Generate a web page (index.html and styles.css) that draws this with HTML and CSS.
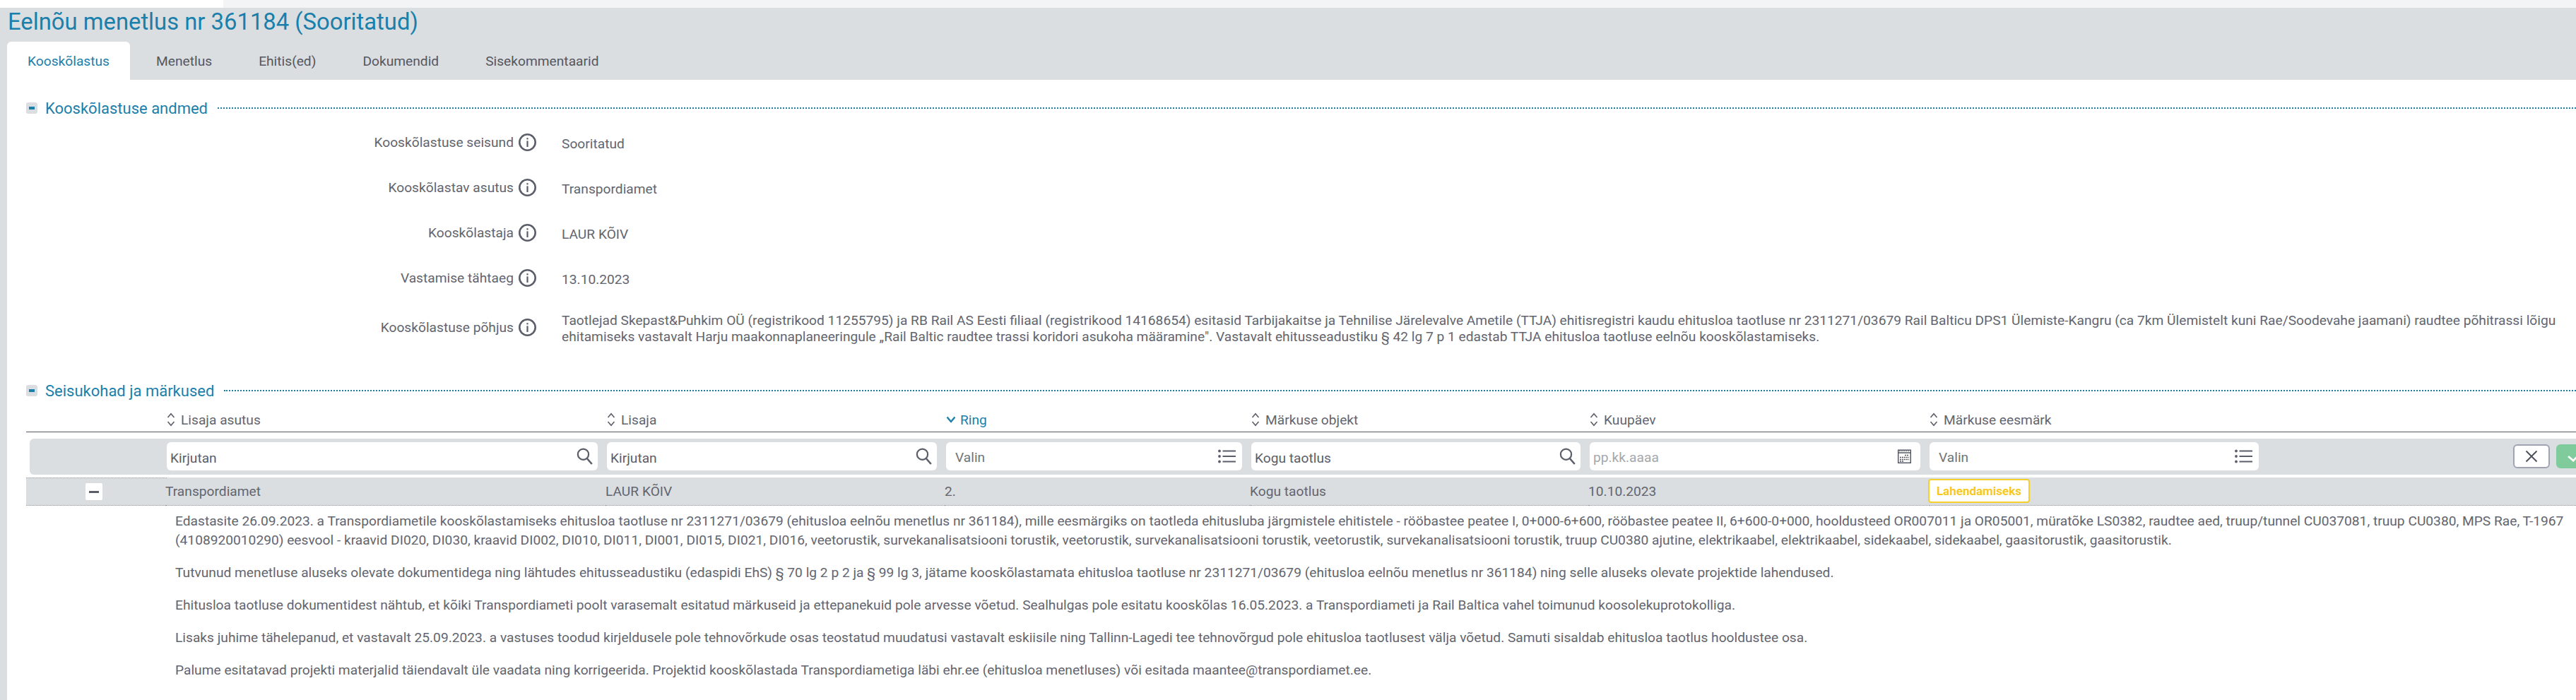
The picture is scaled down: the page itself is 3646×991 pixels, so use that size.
FILE: index.html
```html
<!DOCTYPE html>
<html lang="et">
<head>
<meta charset="utf-8">
<title>Eelnõu menetlus nr 361184</title>
<link rel="stylesheet" href="styles.css">
</head>
<body>
<svg class="defs" width="0" height="0" aria-hidden="true">
  <symbol id="i-info" viewBox="0 0 25 25"><circle cx="12.5" cy="12.5" r="11.2" fill="none" stroke="currentColor" stroke-width="2.6"/><rect x="11.4" y="10.4" width="2.200" height="8.600" fill="currentColor"/><rect x="11.4" y="6.2" width="2.200" height="2.200" fill="currentColor"/></symbol>
  <symbol id="i-sort" viewBox="0 0 12 20"><path d="M1.5 7 6 1.8 10.5 7M1.5 13 6 18.2 10.5 13" fill="none" stroke="currentColor" stroke-width="1.6"/></symbol>
  <symbol id="i-down" viewBox="0 0 14 10"><path d="M1.500 1.500 7 8l5.500-6.500" fill="none" stroke="currentColor" stroke-width="2.400"/></symbol>
  <symbol id="i-search" viewBox="0 0 24 24"><circle cx="9.500" cy="9.200" r="7.600" fill="none" stroke="currentColor" stroke-width="2.200"/><path d="m14.800 15 7 8" fill="none" stroke="currentColor" stroke-width="2.600"/></symbol>
  <symbol id="i-list" viewBox="0 0 25 20"><circle cx="2" cy="2.500" r="1.900" fill="currentColor"/><circle cx="2" cy="10" r="1.900" fill="currentColor"/><circle cx="2" cy="17.500" r="1.900" fill="currentColor"/><path d="M6.500 2.500H25M6.500 10H25M6.500 17.500H25" stroke="currentColor" stroke-width="2.200"/></symbol>
  <symbol id="i-cal" viewBox="0 0 19 20"><rect x=".7" y="1.200" width="17.600" height="18.100" fill="none" stroke="currentColor" stroke-width="1.400"/><path d="M1 5h17" stroke="currentColor" stroke-width="1.400"/><path d="M3 1v2.500M6 1v2.500M9 1v2.500M12 1v2.500M15 1v2.500" stroke="currentColor"/><path d="M10 8.500h6M3 11.500h13M3 14.500h13M3 17h6" stroke="currentColor" stroke-width="1.600" stroke-dasharray="2 1"/></symbol>
</svg>

<div class="topbar"><div class="topbar-left"></div></div>

<header class="header">
  <h1 class="title">Eelnõu menetlus nr 361184 (Sooritatud)</h1>
  <nav class="tabs">
    <a class="tab tab-active">Kooskõlastus</a>
    <a class="tab">Menetlus</a>
    <a class="tab">Ehitis(ed)</a>
    <a class="tab">Dokumendid</a>
    <a class="tab">Sisekommentaarid</a>
  </nav>
</header>

<main class="main">
  <section class="section section-first">
    <div class="section-head">
      <span class="collapse"><span class="collapse-bar"></span></span>
      <h2 class="section-title">Kooskõlastuse andmed</h2>
      <span class="dots"></span>
    </div>
    <div class="field">
      <div class="field-label">Kooskõlastuse seisund</div>
      <svg class="info"><use href="#i-info"/></svg>
      <div class="field-value">Sooritatud</div>
    </div>
    <div class="field">
      <div class="field-label">Kooskõlastav asutus</div>
      <svg class="info"><use href="#i-info"/></svg>
      <div class="field-value">Transpordiamet</div>
    </div>
    <div class="field">
      <div class="field-label">Kooskõlastaja</div>
      <svg class="info"><use href="#i-info"/></svg>
      <div class="field-value">LAUR KÕIV</div>
    </div>
    <div class="field">
      <div class="field-label">Vastamise tähtaeg</div>
      <svg class="info"><use href="#i-info"/></svg>
      <div class="field-value">13.10.2023</div>
    </div>
    <div class="field field-tall">
      <div class="field-label">Kooskõlastuse põhjus</div>
      <svg class="info"><use href="#i-info"/></svg>
      <div class="field-value field-text">Taotlejad Skepast&amp;Puhkim OÜ (registrikood 11255795) ja RB Rail AS Eesti filiaal (registrikood 14168654) esitasid Tarbijakaitse ja Tehnilise Järelevalve Ametile (TTJA) ehitisregistri kaudu ehitusloa taotluse nr 2311271/03679 Rail Balticu DPS1 Ülemiste-Kangru (ca 7km Ülemistelt kuni Rae/Soodevahe jaamani) raudtee põhitrassi lõigu<br>ehitamiseks vastavalt Harju maakonnaplaneeringule „Rail Baltic raudtee trassi koridori asukoha määramine". Vastavalt ehitusseadustiku § 42 lg 7 p 1 edastab TTJA ehitusloa taotluse eelnõu kooskõlastamiseks.</div>
    </div>
  </section>

  <section class="section">
    <div class="section-head">
      <span class="collapse"><span class="collapse-bar"></span></span>
      <h2 class="section-title">Seisukohad ja märkused</h2>
      <span class="dots"></span>
    </div>

    <div class="grid thead">
      <div></div>
      <div class="th"><svg class="sort"><use href="#i-sort"/></svg>Lisaja asutus</div>
      <div class="th"><svg class="sort"><use href="#i-sort"/></svg>Lisaja</div>
      <div class="th th-active"><svg class="sort-down"><use href="#i-down"/></svg>Ring</div>
      <div class="th"><svg class="sort"><use href="#i-sort"/></svg>Märkuse objekt</div>
      <div class="th"><svg class="sort"><use href="#i-sort"/></svg>Kuupäev</div>
      <div class="th"><svg class="sort"><use href="#i-sort"/></svg>Märkuse eesmärk</div>
    </div>

    <div class="grid filters">
      <div></div>
      <div class="input input-tight"><span class="input-text">Kirjutan</span><svg class="ico-search"><use href="#i-search"/></svg></div>
      <div class="input input-tight"><span class="input-text">Kirjutan</span><svg class="ico-search"><use href="#i-search"/></svg></div>
      <div class="input input-muted"><span class="input-text">Valin</span><svg class="ico-list"><use href="#i-list"/></svg></div>
      <div class="input input-tight"><span class="input-text">Kogu taotlus</span><svg class="ico-search"><use href="#i-search"/></svg></div>
      <div class="input input-placeholder"><span class="input-text">pp.kk.aaaa</span><svg class="ico-cal"><use href="#i-cal"/></svg></div>
      <div class="filter-last">
        <div class="input input-muted input-last"><span class="input-text">Valin</span><svg class="ico-list"><use href="#i-list"/></svg></div>
        <button class="btn btn-cancel" type="button"><svg viewBox="0 0 18 18"><path d="M1.500 1.500l15 15M16.500 1.500l-15 15" fill="none" stroke="currentColor" stroke-width="2"/></svg></button>
        <button class="btn btn-ok" type="button"><svg viewBox="0 0 24 18"><path d="M2 9l8 7L22 3" fill="none" stroke="currentColor" stroke-width="3"/></svg></button>
      </div>
    </div>

    <div class="grid row">
      <div class="cell cell-edge"><span class="row-toggle"><span class="row-toggle-bar"></span></span></div>
      <div class="cell">Transpordiamet</div>
      <div class="cell">LAUR KÕIV</div>
      <div class="cell">2.</div>
      <div class="cell">Kogu taotlus</div>
      <div class="cell">10.10.2023</div>
      <div class="cell cell-last"><span class="badge">Lahendamiseks</span></div>
    </div>

    <div class="note">
      <p>Edastasite 26.09.2023. a Transpordiametile kooskõlastamiseks ehitusloa taotluse nr 2311271/03679 (ehitusloa eelnõu menetlus nr 361184), mille eesmärgiks on taotleda ehitusluba järgmistele ehitistele - rööbastee peatee I, 0+000-6+600, rööbastee peatee II, 6+600-0+000, hooldusteed OR007011 ja OR05001, müratõke LS0382, raudtee aed, truup/tunnel CU037081, truup CU0380, MPS Rae, T-1967<br>(4108920010290) eesvool - kraavid DI020, DI030, kraavid DI002, DI010, DI011, DI001, DI015, DI021, DI016, veetorustik, survekanalisatsiooni torustik, veetorustik, survekanalisatsiooni torustik, veetorustik, survekanalisatsiooni torustik, truup CU0380 ajutine, elektrikaabel, elektrikaabel, sidekaabel, sidekaabel, gaasitorustik, gaasitorustik.</p>
      <p>Tutvunud menetluse aluseks olevate dokumentidega ning lähtudes ehitusseadustiku (edaspidi EhS) § 70 lg 2 p 2 ja § 99 lg 3, jätame kooskõlastamata ehitusloa taotluse nr 2311271/03679 (ehitusloa eelnõu menetlus nr 361184) ning selle aluseks olevate projektide lahendused.</p>
      <p>Ehitusloa taotluse dokumentidest nähtub, et kõiki Transpordiameti poolt varasemalt esitatud märkuseid ja ettepanekuid pole arvesse võetud. Sealhulgas pole esitatu kooskõlas 16.05.2023. a Transpordiameti ja Rail Baltica vahel toimunud koosolekuprotokolliga.</p>
      <p>Lisaks juhime tähelepanud, et vastavalt 25.09.2023. a vastuses toodud kirjeldusele pole tehnovõrkude osas teostatud muudatusi vastavalt eskiisile ning Tallinn-Lagedi tee tehnovõrgud pole ehitusloa taotlusest välja võetud. Samuti sisaldab ehitusloa taotlus hooldustee osa.</p>
      <p>Palume esitatavad projekti materjalid täiendavalt üle vaadata ning korrigeerida. Projektid kooskõlastada Transpordiametiga läbi ehr.ee (ehitusloa menetluses) või esitada maantee@transpordiamet.ee.</p>
    </div>
  </section>
</main>
</body>
</html>
```

FILE: styles.css
```css
* { box-sizing: border-box; }
html, body { margin: 0; padding: 0; }
body {
  width: 3646px;
  height: 991px;
  overflow: hidden;
  background: #fff;
  font-family: Roboto, "Liberation Sans", sans-serif;
  font-size: 19.2px;
  color: #62656f;
}
.defs { position: absolute; }

.topbar { height: 11px; background: #f3f4f5; }
.topbar-left { width: 316px; height: 11px; background: #fff; }

.header { height: 102px; background: #dbdee1; display: flex; flex-direction: column; }
.title {
  margin: 0;
  height: 48px;
  padding-left: 11px;
  font-size: 32.800px;
  font-weight: 400;
  line-height: 40px;
  color: #1a80ab;
}
.tabs { display: flex; gap: 8px; padding-left: 10px; height: 54px; }
.tab { display: flex; align-items: center; padding: 0 29px; color: #54575f; }
.tab-active { background: #fff; border-radius: 6px 6px 0 0; color: #1a80ab; }

.main { height: 878px; border-left: 10px solid #dbdee1; padding: 24px 0 0 27px; }

.section-first { margin-bottom: 36px; }
.section-head { display: flex; align-items: center; height: 32px; }
.collapse {
  width: 16px; height: 16px; margin-right: 11px;
  background: #dbdee1; border-radius: 3px;
  display: flex; align-items: center; justify-content: center;
}
.collapse-bar { width: 8px; height: 4px; background: #1a80ab; }
.section-title { margin: 0 14px 0 0; font-size: 22px; font-weight: 400; color: #1a80ab; white-space: nowrap; }
.dots { flex: 1; border-top: 2px dotted #1f7f9c; }

.field {
  display: grid;
  grid-template-columns: 690px 25px 1fr;
  column-gap: 7px;
  align-items: center;
  height: 64px;
}
.field-tall { height: 76px; }
.field-label { text-align: right; }
.info { width: 25px; height: 25px; color: #5b5e69; }
.field-value { margin-left: 29px; padding-top: 4px; white-space: nowrap; }
.field-text { line-height: 23px; }

.grid { display: grid; grid-template-columns: 199px 623px 480px 432px 479px 481px 1fr; }

.thead { height: 43px; border-bottom: 1px solid #555a64; align-items: center; }
.th { display: flex; align-items: center; padding-top: 8px; }
.th-active { color: #1a80ab; }
.sort { width: 12px; height: 20px; margin-right: 8px; color: #5b5e69; }
.sort-down { width: 14px; height: 10px; margin-right: 6px; color: #1a80ab; }

.filters {
  margin: 9px 0 4px 5px;
  height: 51px;
  padding-top: 5px;
  grid-template-columns: 194px 623px 480px 432px 479px 481px 1fr;
  background: #dbdee1;
  border-radius: 6px 0 0 6px;
}
.input {
  height: 40px;
  width: calc(100% - 13px);
  background: #fff;
  border-radius: 6px;
  display: flex;
  align-items: center;
  justify-content: space-between;
  padding: 0 6px 0 13px;
  color: #70757a;
  white-space: nowrap;
}
.input-text { padding-top: 2px; }
.input-tight { padding-left: 5px; color: #5b5e69; }
.input-tight .input-text { padding-top: 4px; }
.input-placeholder { color: #a5a8ad; padding-left: 5px; padding-right: 13px; }
.input-muted { padding-right: 9px; }
.ico-search { width: 24px; height: 24px; color: #5b5e69; }
.ico-list { width: 25px; height: 20px; color: #5b5e69; }
.ico-cal { width: 19px; height: 20px; color: #4f525c; }

.filter-last { display: flex; align-items: flex-start; }
.input-last { width: 466px; flex: none; }
.btn {
  flex: none;
  width: 52px; height: 34px;
  margin-top: 3px;
  padding: 0;
  border-radius: 6px;
  display: flex; align-items: center; justify-content: center;
}
.btn-cancel { margin-left: 360px; background: #fff; border: 2px solid #a0a3b3; color: #4f525c; }
.btn-cancel svg { width: 18px; height: 18px; }
.btn-ok { margin-left: 9px; background: #7fcb9c; border: 2px solid #7fcb9c; color: #fff; }
.btn-ok svg { width: 22px; height: 16px; }

.row { height: 40px; background: #dbdee1; }
.cell {
  margin-left: -2px;
  display: flex; align-items: center;
  border-bottom: 1px dotted #9a9da3;
  white-space: nowrap;
}
.cell-edge { margin-left: 0; padding-left: 84px; border-top: 1px dotted #9a9da3; }
.cell-last { margin-left: 0; align-items: flex-start; border-top: 0; padding-top: 2px; }
.row-toggle {
  width: 24px; height: 24px;
  background: #fff; border-radius: 2px;
  display: flex; align-items: center; justify-content: center;
}
.row-toggle-bar { width: 14px; height: 3px; background: #5b5e69; }
.badge {
  display: block;
  height: 34px;
  width: 144px;
  margin-left: -2px;
  background: #fff;
  border: 2px solid #f5cf2b;
  border-radius: 4px;
  text-align: center;
  font-size: 17px;
  font-weight: 700;
  line-height: 30px;
  color: #f7c91e;
}

.note { padding: 8px 0 0 211px; line-height: 27px; white-space: nowrap; }
.note p { margin: 0 0 19px; }
```
